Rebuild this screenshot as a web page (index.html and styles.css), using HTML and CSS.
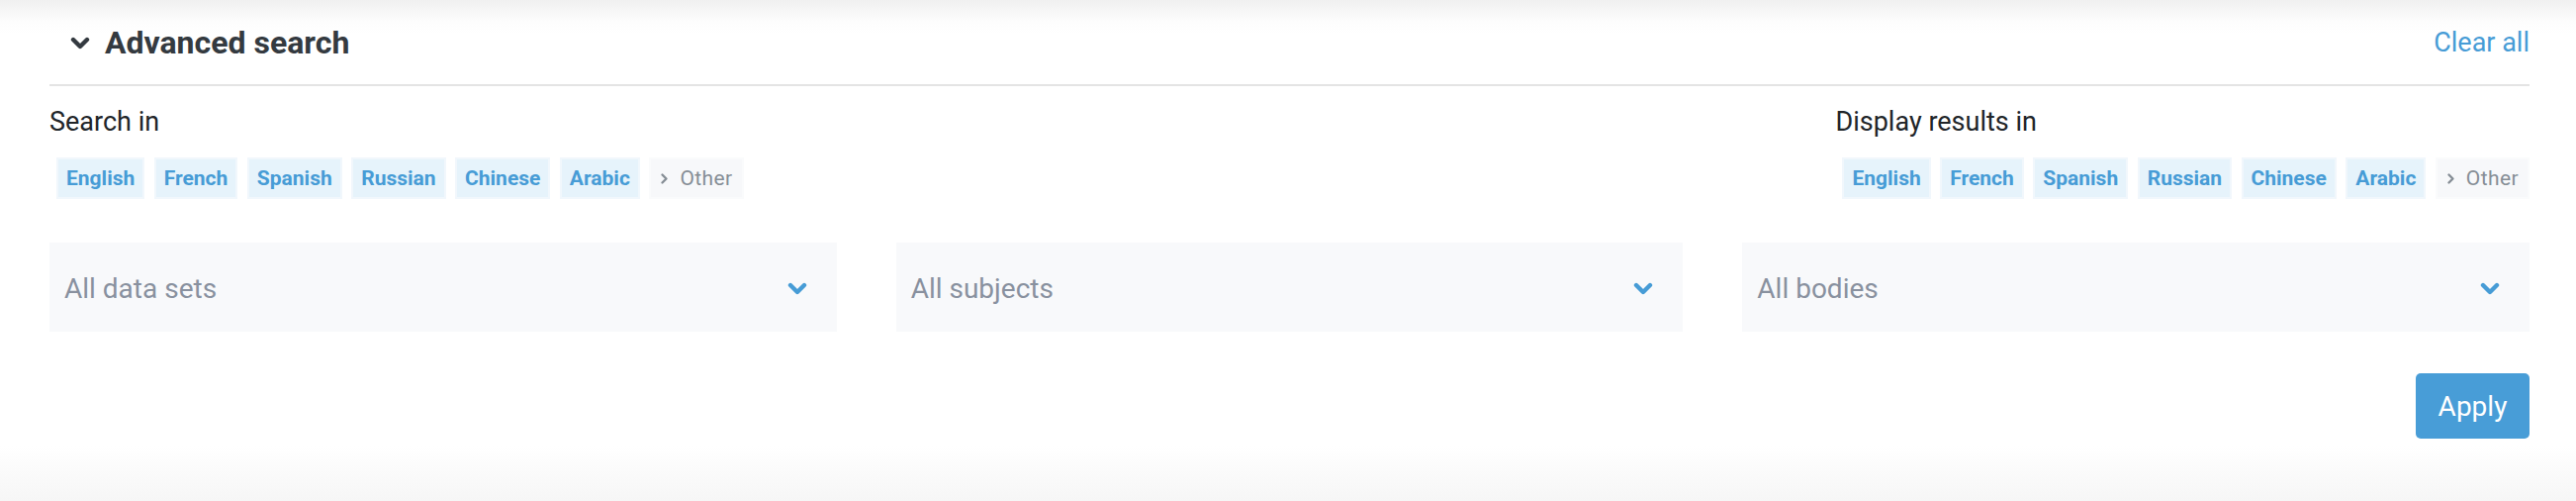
FILE: index.html
```html
<!DOCTYPE html>
<html lang="en">
<head>
    <meta charset="UTF-8">
    <meta name="viewport" content="width=device-width, initial-scale=1.0">
    <title>Advanced search</title>
    <link rel="stylesheet" href="styles.css">
</head>
<body>
    <div class="advanced-search">
        <div class="as-header">
            <button class="toggle">
                <svg class="toggle-icon" width="20" height="13" viewBox="0 0 20 13"><path d="M3 3 L10 10 L17 3" fill="none" stroke="#343a40" stroke-width="4.4" stroke-linecap="round" stroke-linejoin="round"/></svg>
                Advanced search
            </button>
            <a class="clear-all" href="#">Clear all</a>
        </div>

        <div class="lang-row">
            <div class="lang-group">
                <div class="label">Search in</div>
                <div class="tags">
                    <span class="tag">English</span>
                    <span class="tag">French</span>
                    <span class="tag">Spanish</span>
                    <span class="tag">Russian</span>
                    <span class="tag">Chinese</span>
                    <span class="tag">Arabic</span>
                    <span class="tag other"><svg width="9" height="13" viewBox="0 0 9 13"><path d="M2.5 2.5 L6.5 6.5 L2.5 10.5" fill="none" stroke="#868e96" stroke-width="2.4" stroke-linecap="round" stroke-linejoin="round"/></svg>Other</span>
                </div>
            </div>
            <div class="lang-group">
                <div class="label">Display results in</div>
                <div class="tags">
                    <span class="tag">English</span>
                    <span class="tag">French</span>
                    <span class="tag">Spanish</span>
                    <span class="tag">Russian</span>
                    <span class="tag">Chinese</span>
                    <span class="tag">Arabic</span>
                    <span class="tag other"><svg width="9" height="13" viewBox="0 0 9 13"><path d="M2.5 2.5 L6.5 6.5 L2.5 10.5" fill="none" stroke="#868e96" stroke-width="2.4" stroke-linecap="round" stroke-linejoin="round"/></svg>Other</span>
                </div>
            </div>
        </div>

        <div class="filters">
            <div class="select">
                <span>All data sets</span>
                <svg width="20" height="13" viewBox="0 0 20 13"><path d="M3 3 L10 10 L17 3" fill="none" stroke="#479cd6" stroke-width="4.4" stroke-linecap="round" stroke-linejoin="round"/></svg>
            </div>
            <div class="select">
                <span>All subjects</span>
                <svg width="20" height="13" viewBox="0 0 20 13"><path d="M3 3 L10 10 L17 3" fill="none" stroke="#479cd6" stroke-width="4.4" stroke-linecap="round" stroke-linejoin="round"/></svg>
            </div>
            <div class="select">
                <span>All bodies</span>
                <svg width="20" height="13" viewBox="0 0 20 13"><path d="M3 3 L10 10 L17 3" fill="none" stroke="#479cd6" stroke-width="4.4" stroke-linecap="round" stroke-linejoin="round"/></svg>
            </div>
        </div>

        <div class="actions">
            <button class="apply">Apply</button>
        </div>
    </div>
</body>
</html>
```

FILE: styles.css
```css
html, body {
    margin: 0;
    padding: 0;
}

body {
    font-family: Roboto, 'Liberation Sans', sans-serif;
    height: 506px;
    box-sizing: border-box;
    padding: 13px 47px 0 50px;
    background: linear-gradient(to bottom, #f0f0f0 0, #fdfdfd 22px, #fff 34px, #fff 450px, #f6f6f6 506px);
    color: #212529;
}

.as-header {
    display: flex;
    align-items: center;
    justify-content: space-between;
    height: 60px;
    padding-left: 21px;
    margin-bottom: 12px;
}

.toggle {
    display: flex;
    align-items: center;
    gap: 15px;
    background: none;
    border: none;
    padding: 0;
    font-family: inherit;
    font-size: 32px;
    font-weight: 700;
    color: #343a40;
    cursor: pointer;
}

.clear-all {
    font-size: 27px;
    color: #479cd6;
    text-decoration: none;
}

.lang-row {
    display: flex;
    justify-content: space-between;
    border-top: 2px solid #e4e4e4;
    padding-top: 20px;
}

.label {
    font-size: 27px;
    line-height: 32px;
    margin-bottom: 20px;
}

.tags {
    display: flex;
    gap: 9.5px;
    padding-left: 7px;
}

.tag {
    display: flex;
    align-items: center;
    height: 42px;
    box-sizing: border-box;
    padding: 0 8px;
    border: 2px solid #f1f7fc;
    background: #e6f3fb;
    color: #479cd6;
    font-size: 21px;
    font-weight: 700;
}

.tag.other {
    gap: 11px;
    padding: 0 9px 0 9px;
    border-color: #fafbfc;
    background: #f7f8fa;
    color: #868e96;
    font-weight: 400;
    letter-spacing: 0.4px;
}

.filters {
    display: grid;
    grid-template-columns: repeat(3, 1fr);
    gap: 60px;
    margin-top: 44px;
}

.select {
    display: flex;
    align-items: center;
    justify-content: space-between;
    height: 90px;
    padding: 2px 30px 0 15px;
    box-sizing: border-box;
    background: #f8f9fb;
    font-size: 28px;
    color: #89919f;
}

.actions {
    display: flex;
    justify-content: flex-end;
    margin-top: 42px;
}

.apply {
    height: 66px;
    width: 115px;
    border: none;
    border-radius: 5px;
    background: #489dd7;
    color: white;
    font-family: inherit;
    font-size: 28px;
    cursor: pointer;
}
```
